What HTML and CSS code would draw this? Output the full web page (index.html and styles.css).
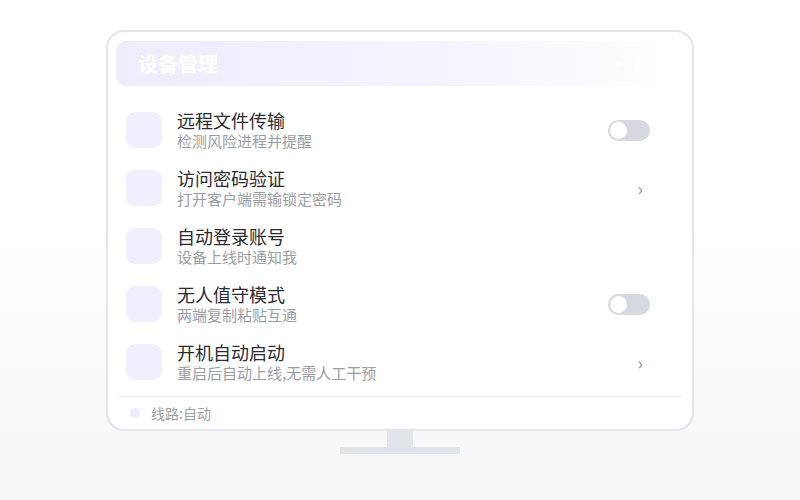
FILE: index.html
```html
<!DOCTYPE html>
<html lang="zh-CN">
<head>
  <meta charset="UTF-8">
  <meta name="viewport" content="width=device-width, initial-scale=1.0">
  <title>设备管理</title>
  <link rel="stylesheet" href="styles.css">
</head>
<body>

  <div class="monitor">
    <div class="screen">
      <div class="header">
        <h1>设备管理</h1>
        <div class="dots"><span></span><span></span><span></span></div>
      </div>

      <ul class="list">
        <li class="row">
          <div class="icon"></div>
          <div class="text">
            <div class="title">远程文件传输</div>
            <div class="sub">检测风险进程并提醒</div>
          </div>
          <div class="toggle"><span class="knob"></span></div>
        </li>
        <li class="row">
          <div class="icon"></div>
          <div class="text">
            <div class="title">访问密码验证</div>
            <div class="sub">打开客户端需输锁定密码</div>
          </div>
          <div class="chevron">›</div>
        </li>
        <li class="row">
          <div class="icon"></div>
          <div class="text">
            <div class="title">自动登录账号</div>
            <div class="sub">设备上线时通知我</div>
          </div>
        </li>
        <li class="row">
          <div class="icon"></div>
          <div class="text">
            <div class="title">无人值守模式</div>
            <div class="sub">两端复制粘贴互通</div>
          </div>
          <div class="toggle"><span class="knob"></span></div>
        </li>
        <li class="row">
          <div class="icon"></div>
          <div class="text">
            <div class="title">开机自动启动</div>
            <div class="sub">重启后自动上线,无需人工干预</div>
          </div>
          <div class="chevron">›</div>
        </li>
      </ul>

      <div class="footer">
        <span class="dot"></span>
        <span>线路:自动</span>
      </div>
    </div>
    <div class="neck"></div>
    <div class="base"></div>
  </div>

</body>
</html>
```

FILE: styles.css
```css
html, body {
  height: 100%;
}

body {
  margin: 0;
  font-family: "Noto Sans CJK SC", "Noto Sans", sans-serif;
  background: linear-gradient(180deg, #ffffff 0%, #ffffff 45%, #f6f6f8 100%);
  color: #2b2c33;
}

.monitor {
  display: flex;
  flex-direction: column;
  align-items: center;
  padding-top: 30px;
}

.screen {
  width: 568px;
  padding: 9px 8px 0 8px;
  background: #fff;
  border: 2px solid #e3e5ea;
  border-radius: 18px;
}

.header {
  height: 45px;
  display: flex;
  align-items: center;
  justify-content: space-between;
  padding: 0 22px;
  border-radius: 10px;
  background: linear-gradient(90deg, #efedfd 0%, #f3f2fd 50%, rgba(250, 250, 254, 0.6) 90%, rgba(255, 255, 255, 0) 100%);
  margin-right: 10px;
}

.header h1 {
  margin: 0;
  font-size: 20px;
  font-weight: 700;
  color: #fff;
}

.dots {
  display: flex;
  gap: 14px;
  margin-right: -6px;
}

.dots span {
  width: 5px;
  height: 5px;
  border-radius: 50%;
  background: #fff;
}

.list {
  list-style: none;
  margin: 0;
  padding: 15px 0 5px;
}

.row {
  height: 58px;
  display: flex;
  align-items: center;
  padding: 0 34px 0 10px;
}

.icon {
  width: 36px;
  height: 36px;
  border-radius: 9px;
  background: #f1eefd;
  flex-shrink: 0;
}

.text {
  flex: 1;
  margin-left: 15px;
  display: flex;
  flex-direction: column;
}

.title {
  font-size: 18px;
  line-height: 22px;
  color: #2b2c33;
}

.sub {
  font-size: 15px;
  line-height: 20px;
  color: #9b9da6;
}

.toggle {
  width: 42px;
  height: 21px;
  border-radius: 11px;
  background: #d6d9df;
  display: flex;
  align-items: center;
  padding: 0 2px;
  box-sizing: border-box;
}

.knob {
  width: 17px;
  height: 17px;
  border-radius: 50%;
  background: #fff;
}

.chevron {
  font-size: 18px;
  color: #8b8e97;
  margin-right: 7px;
}

.footer {
  display: flex;
  align-items: center;
  gap: 11px;
  height: 32px;
  margin: 0 3px;
  padding-left: 11px;
  border-top: 1px solid #eceef1;
  font-size: 14px;
  color: #9b9da6;
}

.dot {
  width: 10px;
  height: 10px;
  border-radius: 50%;
  background: #eeebfc;
}

.neck {
  width: 26px;
  height: 16px;
  background: #e1e4e9;
}

.base {
  width: 120px;
  height: 7px;
  background: #e1e4e9;
}
```
